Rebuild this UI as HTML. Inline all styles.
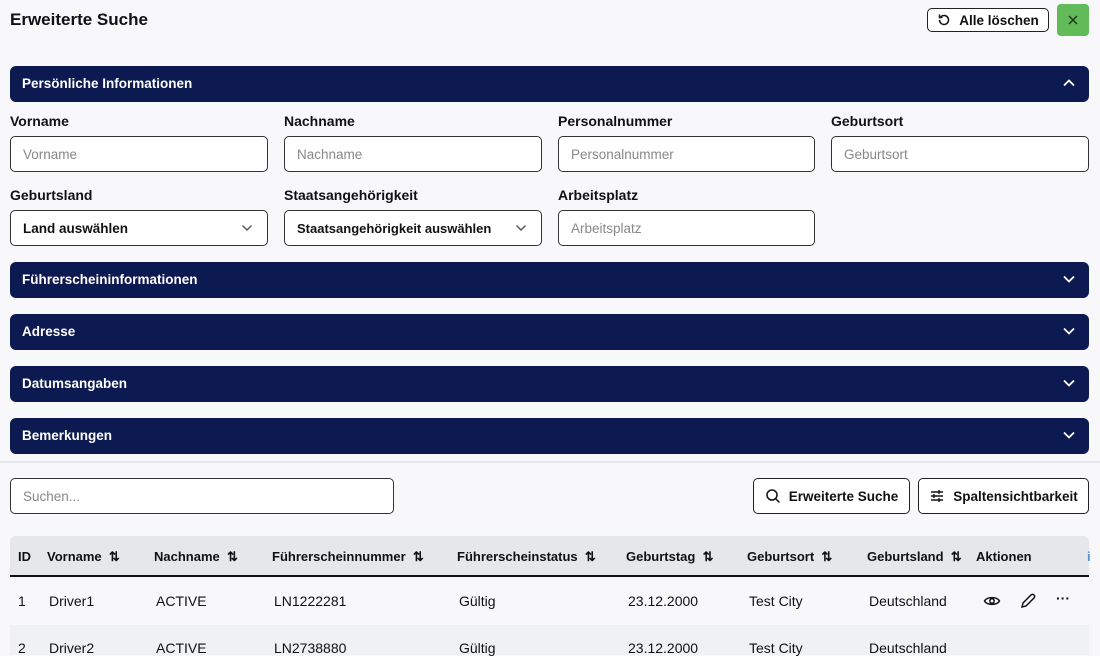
<!DOCTYPE html>
<html><head><meta charset="utf-8"><style>
*{box-sizing:border-box;margin:0;padding:0}
body{width:1100px;height:647px;overflow:hidden;background:#f8f8fa;font-family:"Liberation Sans",sans-serif;color:#111;position:relative}
.abs{position:absolute}
h1{position:absolute;left:10px;top:10px;font-size:17px;font-weight:bold;color:#111}
.btn{position:absolute;border:1px solid #222;border-radius:5px;background:#fff;font-size:13.5px;font-weight:bold;display:flex;align-items:center;justify-content:center;gap:8px}
.bar{position:absolute;left:10px;width:1079px;height:36px;background:#0d1a52;border-radius:6px;color:#fff;font-size:13.5px;font-weight:bold;padding-left:12px;line-height:36px}
.bar svg{position:absolute;right:14px;top:13px}
.lbl{position:absolute;font-size:14px;font-weight:bold}
.inp{position:absolute;width:258px;height:36px;border:1px solid #333;border-radius:5px;background:#fff;font-size:13.5px;color:#888;padding-left:12px;line-height:36px}
.sel{color:#111;font-weight:bold}
.sel svg{position:absolute;right:14px;top:13px}
.th{position:absolute;top:549px;font-size:13px;font-weight:bold}
.td{position:absolute;font-size:14px}
</style></head><body>
<h1>Erweiterte Suche</h1>
<div class="btn" style="left:927px;top:8px;width:122px;height:24px;border-radius:5px">
<svg width="14" height="14" viewBox="0 0 14 14" fill="none" stroke="#111" stroke-width="1.5"><path d="M2.5 7a4.5 4.5 0 1 0 1.3-3.2"/><path d="M2.5 1.5v3h3"/></svg>Alle löschen</div>
<div class="abs" style="left:1057px;top:4px;width:32px;height:32px;background:#62bb58;border-radius:4px">
<svg width="32" height="32" viewBox="0 0 32 32" stroke="#1a3a1a" stroke-width="1.5"><path d="M12 12l8 8M20 12l-8 8"/></svg></div>

<div class="bar" style="top:66px">Persönliche Informationen<svg width="12" height="8" viewBox="0 0 12 8" fill="none" stroke="#fff" stroke-width="1.8"><path d="M1 6.5l5-5 5 5"/></svg></div>

<div class="lbl" style="left:10px;top:113px">Vorname</div>
<div class="lbl" style="left:284px;top:113px">Nachname</div>
<div class="lbl" style="left:558px;top:113px">Personalnummer</div>
<div class="lbl" style="left:831px;top:113px">Geburtsort</div>
<div class="inp" style="left:10px;top:136px">Vorname</div>
<div class="inp" style="left:284px;top:136px">Nachname</div>
<div class="inp" style="left:558px;top:136px;width:257px">Personalnummer</div>
<div class="inp" style="left:831px;top:136px">Geburtsort</div>

<div class="lbl" style="left:10px;top:187px">Geburtsland</div>
<div class="lbl" style="left:284px;top:187px">Staatsangehörigkeit</div>
<div class="lbl" style="left:558px;top:187px">Arbeitsplatz</div>
<div class="inp sel" style="left:10px;top:210px">Land auswählen<svg width="12" height="8" viewBox="0 0 12 8" fill="none" stroke="#555" stroke-width="1.4"><path d="M1.5 1.5l4.5 4.5 4.5-4.5"/></svg></div>
<div class="inp sel" style="left:284px;top:210px;font-size:13px">Staatsangehörigkeit auswählen<svg width="12" height="8" viewBox="0 0 12 8" fill="none" stroke="#555" stroke-width="1.4"><path d="M1.5 1.5l4.5 4.5 4.5-4.5"/></svg></div>
<div class="inp" style="left:558px;top:210px;width:257px">Arbeitsplatz</div>

<div class="bar" style="top:262px">Führerscheininformationen<svg width="12" height="8" viewBox="0 0 12 8" fill="none" stroke="#fff" stroke-width="1.8"><path d="M1 1.5l5 5 5-5"/></svg></div>
<div class="bar" style="top:314px">Adresse<svg width="12" height="8" viewBox="0 0 12 8" fill="none" stroke="#fff" stroke-width="1.8"><path d="M1 1.5l5 5 5-5"/></svg></div>
<div class="bar" style="top:366px">Datumsangaben<svg width="12" height="8" viewBox="0 0 12 8" fill="none" stroke="#fff" stroke-width="1.8"><path d="M1 1.5l5 5 5-5"/></svg></div>
<div class="bar" style="top:418px">Bemerkungen<svg width="12" height="8" viewBox="0 0 12 8" fill="none" stroke="#fff" stroke-width="1.8"><path d="M1 1.5l5 5 5-5"/></svg></div>

<div class="abs" style="left:0;top:461px;width:1100px;height:2px;background:#e6e7ea"></div>

<div class="inp" style="left:10px;top:478px;width:384px">Suchen...</div>
<div class="btn" style="left:753px;top:478px;width:157px;height:36px">
<svg width="16" height="16" viewBox="0 0 16 16" fill="none" stroke="#111" stroke-width="1.5"><circle cx="7" cy="7" r="5"/><path d="M11 11l3.5 3.5"/></svg>Erweiterte Suche</div>
<div class="btn" style="left:918px;top:478px;width:171px;height:36px">
<svg width="16" height="16" viewBox="0 0 16 16" fill="none" stroke="#111" stroke-width="1.4"><path d="M2 4h12M2 8h12M2 12h12"/><path d="M10 2v4M5 6v4M10 10v4"/></svg>Spaltensichtbarkeit</div>

<div class="abs" style="left:10px;top:536px;width:1079px;height:41px;background:#e6e7eb;border-radius:6px 6px 0 0;border-bottom:2px solid #111"></div>
<div class="th" style="left:18px">ID</div>
<div class="th" style="left:47px">Vorname &nbsp;⇅</div>
<div class="th" style="left:154px">Nachname &nbsp;⇅</div>
<div class="th" style="left:272px">Führerscheinnummer &nbsp;⇅</div>
<div class="th" style="left:457px">Führerscheinstatus &nbsp;⇅</div>
<div class="th" style="left:626px">Geburtstag &nbsp;⇅</div>
<div class="th" style="left:747px">Geburtsort &nbsp;⇅</div>
<div class="th" style="left:867px">Geburtsland &nbsp;⇅</div>
<div class="th" style="left:976px">Aktionen</div>
<div class="th" style="left:1087px;color:#5a8fd6">i</div>

<div class="abs" style="left:10px;top:625px;width:1079px;height:30px;background:#f0f1f4"></div>
<div class="td" style="left:18px;top:593px">1</div>
<div class="td" style="left:49px;top:593px">Driver1</div>
<div class="td" style="left:156px;top:593px">ACTIVE</div>
<div class="td" style="left:274px;top:593px">LN1222281</div>
<div class="td" style="left:459px;top:593px">Gültig</div>
<div class="td" style="left:628px;top:593px">23.12.2000</div>
<div class="td" style="left:749px;top:593px">Test City</div>
<div class="td" style="left:869px;top:593px">Deutschland</div>
<svg class="abs" style="left:983px;top:593px" width="18" height="16" viewBox="0 0 18 16" fill="none" stroke="#111" stroke-width="1.5"><path d="M1.5 8C4 3.5 14 3.5 16.5 8C14 12.5 4 12.5 1.5 8z"/><circle cx="9" cy="8" r="2.2"/></svg>
<svg class="abs" style="left:1019px;top:592px" width="18" height="18" viewBox="0 0 18 18" fill="none" stroke="#111" stroke-width="1.5"><path d="M3 15l1-4 8-8a2 2 0 0 1 3 3l-8 8z"/></svg>
<div class="td" style="left:1056px;top:590px;font-weight:bold">···</div>

<div class="td" style="left:18px;top:640px">2</div>
<div class="td" style="left:49px;top:640px">Driver2</div>
<div class="td" style="left:156px;top:640px">ACTIVE</div>
<div class="td" style="left:274px;top:640px">LN2738880</div>
<div class="td" style="left:459px;top:640px">Gültig</div>
<div class="td" style="left:628px;top:640px">23.12.2000</div>
<div class="td" style="left:749px;top:640px">Test City</div>
<div class="td" style="left:869px;top:640px">Deutschland</div>
</body></html>
